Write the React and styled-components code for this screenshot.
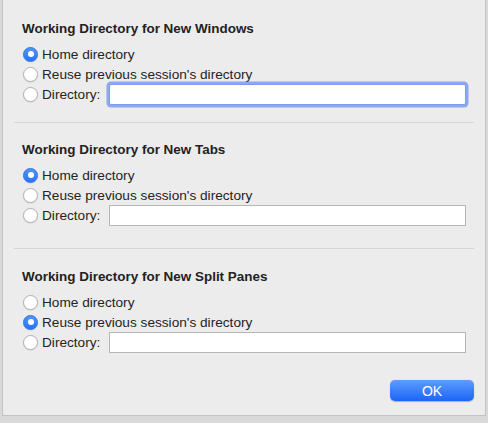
import styled, { createGlobalStyle } from "styled-components";

const Global = createGlobalStyle`
  html, body {
    margin: 0;
    padding: 0;
    background: #d9d9d9;
  }
  body {
    width: 488px;
    height: 423px;
    overflow: hidden;
    font-family: "Liberation Sans", Arial, sans-serif;
    color: #242424;
  }
`;

const Sheet = styled.div`
  box-sizing: border-box;
  margin-left: 2px;
  width: 484px;
  height: 416px;
  padding: 21px 11px 0 11px;
  background: #ececec;
  border: 1px solid #c3c3c3;
  border-top: none;
  display: flex;
  flex-direction: column;
`;

const Section = styled.section`
  padding: ${(p) => p.$top}px 8px ${(p) => p.$bottom}px 8px;
  border-bottom: ${(p) => (p.$last ? "none" : "1px solid #d6d6d6")};
  display: flex;
  flex-direction: column;
`;

const Heading = styled.h3`
  margin: 0 0 7px 0;
  font-size: 13.45px;
  line-height: 16px;
  font-weight: bold;
  color: #222;
`;

const Row = styled.label`
  height: 20px;
  display: flex;
  align-items: center;
  padding-left: 1px;
  font-size: 13.65px;
`;

const Radio = styled.span`
  box-sizing: border-box;
  width: 15px;
  height: 15px;
  border-radius: 50%;
  margin-right: 4px;
  flex-shrink: 0;
  display: flex;
  align-items: center;
  justify-content: center;
  background: ${(p) => (p.$on ? "linear-gradient(#4f97fb, #2a72f6)" : "#fff")};
  border: 1px solid ${(p) => (p.$on ? "#2d6fe6" : "#b2b2b2")};
  box-shadow: 0 0.5px 1px rgba(0, 0, 0, 0.12);

  &::after {
    content: "";
    display: ${(p) => (p.$on ? "block" : "none")};
    width: 6px;
    height: 6px;
    border-radius: 50%;
    background: #fff;
  }
`;

const Field = styled.input`
  box-sizing: border-box;
  flex: 1;
  height: 21px;
  margin-left: 9px;
  background: #fff;
  border: 1px solid ${(p) => (p.$focus ? "#7d9df0" : "#b6b6b6")};
  box-shadow: ${(p) => (p.$focus ? "0 0 0 2.5px rgba(110, 145, 240, 0.75)" : "none")};
  border-radius: ${(p) => (p.$focus ? "2px" : "0")};
  outline: none;
  font: inherit;
`;

const Footer = styled.div`
  display: flex;
  justify-content: flex-end;
  padding: 28px 0 0 0;
`;

const OkButton = styled.button`
  width: 84px;
  height: 21px;
  border: none;
  border-radius: 5px;
  background: linear-gradient(#5c9dfd, #1d65f6);
  box-shadow: 0 0.5px 1px rgba(0, 0, 0, 0.25);
  color: #fff;
  font-family: "Liberation Sans", Arial, sans-serif;
  font-size: 14px;
  padding: 0;
`;

const groups = [
  { title: "Working Directory for New Windows", on: 0, focus: true, top: 0, bottom: 18 },
  { title: "Working Directory for New Tabs", on: 0, focus: false, top: 19, bottom: 23 },
  { title: "Working Directory for New Split Panes", on: 1, focus: false, top: 20, bottom: 0, last: true },
];

function Group({ g }) {
  return (
    <Section $top={g.top} $bottom={g.bottom} $last={g.last}>
      <Heading>{g.title}</Heading>
      <Row>
        <Radio $on={g.on === 0} />
        Home directory
      </Row>
      <Row>
        <Radio $on={g.on === 1} />
        Reuse previous session's directory
      </Row>
      <Row>
        <Radio $on={g.on === 2} />
        Directory:
        <Field $focus={g.focus} defaultValue="" />
      </Row>
    </Section>
  );
}

export default function App() {
  return (
    <>
      <Global />
      <Sheet>
        {groups.map((g) => (
          <Group key={g.title} g={g} />
        ))}
        <Footer>
          <OkButton>OK</OkButton>
        </Footer>
      </Sheet>
    </>
  );
}
